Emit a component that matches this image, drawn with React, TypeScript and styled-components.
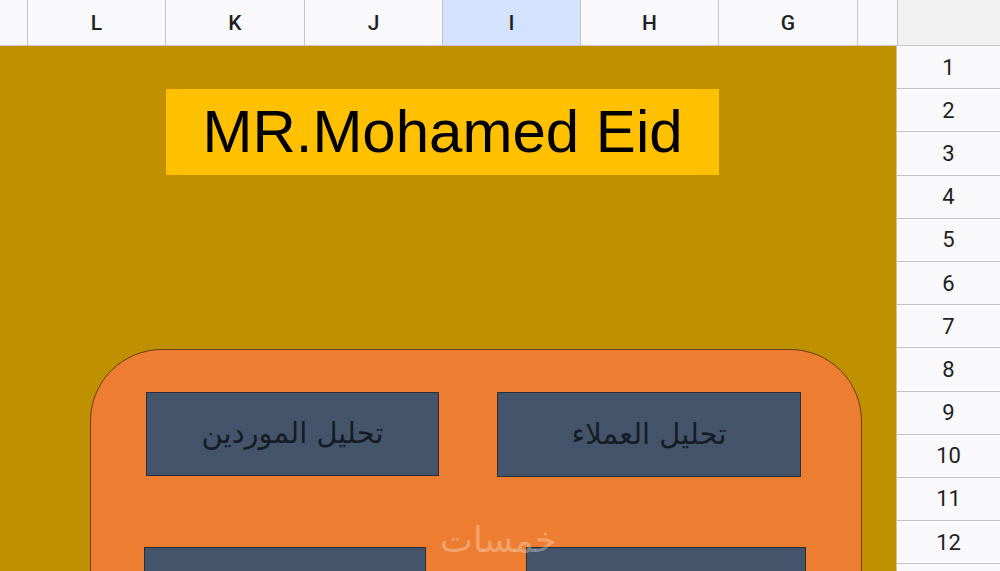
import React from 'react'
import styled, { createGlobalStyle } from 'styled-components'

const GlobalStyle = createGlobalStyle`
  html, body {
    margin: 0;
    padding: 0;
    background: #ffffff;
    font-family: Roboto, 'Noto Sans', sans-serif;
  }
  #root {
    width: 1000px;
    height: 571px;
    overflow: hidden;
  }
`

const columns = [
  { label: '', width: 28 },
  { label: 'L', width: 138 },
  { label: 'K', width: 139 },
  { label: 'J', width: 138 },
  { label: 'I', width: 138, active: true },
  { label: 'H', width: 138 },
  { label: 'G', width: 139 },
  { label: '', width: 40 },
]

const rows = ['1', '2', '3', '4', '5', '6', '7', '8', '9', '10', '11', '12', '']

const App: React.FC = () => {
  return (
    <>
      <GlobalStyle />
      <Frame>
        <HeaderStrip>
          {columns.map((c, i) => (
            <ColHead key={i} $w={c.width} $active={c.active}>
              {c.label}
            </ColHead>
          ))}
          <Corner />
        </HeaderStrip>
        <Body>
          <Sheet>
            <TitleBox>MR.Mohamed Eid</TitleBox>
            <Panel>
              <ButtonRow $left={55} $right={60}>
                <MenuButton $w={293} $h={84}>تحليل الموردين</MenuButton>
                <MenuButton $w={304} $h={85}>تحليل العملاء</MenuButton>
              </ButtonRow>
              <ButtonRow $left={53} $right={55} $gapTop={70}>
                <MenuButton $w={282} $h={84} />
                <MenuButton $w={280} $h={84} />
              </ButtonRow>
            </Panel>
            <Watermark>خمسات</Watermark>
          </Sheet>
          <RowHeads>
            {rows.map((r, i) => (
              <RowHead key={i}>{r}</RowHead>
            ))}
          </RowHeads>
        </Body>
      </Frame>
    </>
  )
}

const Frame = styled.div`
  width: 1000px;
  height: 571px;
  display: flex;
  flex-direction: column;
  overflow: hidden;
`

const HeaderStrip = styled.div`
  display: flex;
  height: 46px;
  flex-shrink: 0;
  border-bottom: 1px solid #c7c7c7;
  box-sizing: border-box;
`

const ColHead = styled.div<{ $w: number; $active?: boolean }>`
  width: ${p => p.$w}px;
  flex-shrink: 0;
  box-sizing: border-box;
  border-right: 1px solid #c4c4c4;
  background: ${p => (p.$active ? '#d3e3fd' : '#f9f9fc')};
  display: flex;
  align-items: center;
  justify-content: center;
  font-family: Roboto, 'Noto Sans', sans-serif;
  font-size: 21px;
  font-weight: 500;
  color: #1f1f1f;
`

const Corner = styled.div`
  flex: 1;
  background: #f1f1f1;
`

const Body = styled.div`
  flex: 1;
  display: flex;
  min-height: 0;
`

const Sheet = styled.div`
  position: relative;
  width: 897px;
  flex-shrink: 0;
  background: #bf9000;
  overflow: hidden;
  padding-top: 43px;
  box-sizing: border-box;
  border-right: 1px solid #cfc2a0;
`

const TitleBox = styled.div`
  margin-left: 166px;
  width: 553px;
  height: 86px;
  background: #ffc000;
  display: flex;
  align-items: center;
  justify-content: center;
  font-family: 'Liberation Sans', Arial, sans-serif;
  font-size: 60px;
  color: #000000;
  line-height: 1;
`

const Panel = styled.div`
  margin-top: 174px;
  margin-left: 90px;
  width: 772px;
  height: 320px;
  box-sizing: border-box;
  background: #ed7d31;
  border: 1px solid #6b3b12;
  border-radius: 72px 72px 0 0;
  padding-top: 42px;
`

const ButtonRow = styled.div<{ $left: number; $right: number; $gapTop?: number }>`
  display: flex;
  justify-content: space-between;
  align-items: flex-start;
  padding-left: ${p => p.$left}px;
  padding-right: ${p => p.$right}px;
  margin-top: ${p => p.$gapTop ?? 0}px;
`

const MenuButton = styled.div<{ $w: number; $h: number }>`
  width: ${p => p.$w}px;
  height: ${p => p.$h}px;
  box-sizing: border-box;
  background: #44546a;
  border: 1px solid #2a2f36;
  display: flex;
  align-items: center;
  justify-content: center;
  direction: rtl;
  font-family: 'DejaVu Sans', 'Noto Sans', sans-serif;
  font-size: 29px;
  font-weight: 500;
  color: #161c26;
  padding-bottom: 2px;
`

const Watermark = styled.div`
  position: absolute;
  left: 440px;
  top: 474px;
  direction: rtl;
  font-family: 'DejaVu Sans', sans-serif;
  font-size: 35px;
  color: rgba(255, 255, 255, 0.3);
  letter-spacing: 1px;
`

const RowHeads = styled.div`
  flex: 1;
  display: flex;
  flex-direction: column;
  background: #f9f9fc;
`

const RowHead = styled.div`
  height: 43.2px;
  flex-shrink: 0;
  box-sizing: border-box;
  border-bottom: 1px solid #c4c4c4;
  display: flex;
  align-items: center;
  justify-content: center;
  font-family: Roboto, 'Noto Sans', sans-serif;
  font-size: 22px;
  color: #1f1f1f;
`

export default App
